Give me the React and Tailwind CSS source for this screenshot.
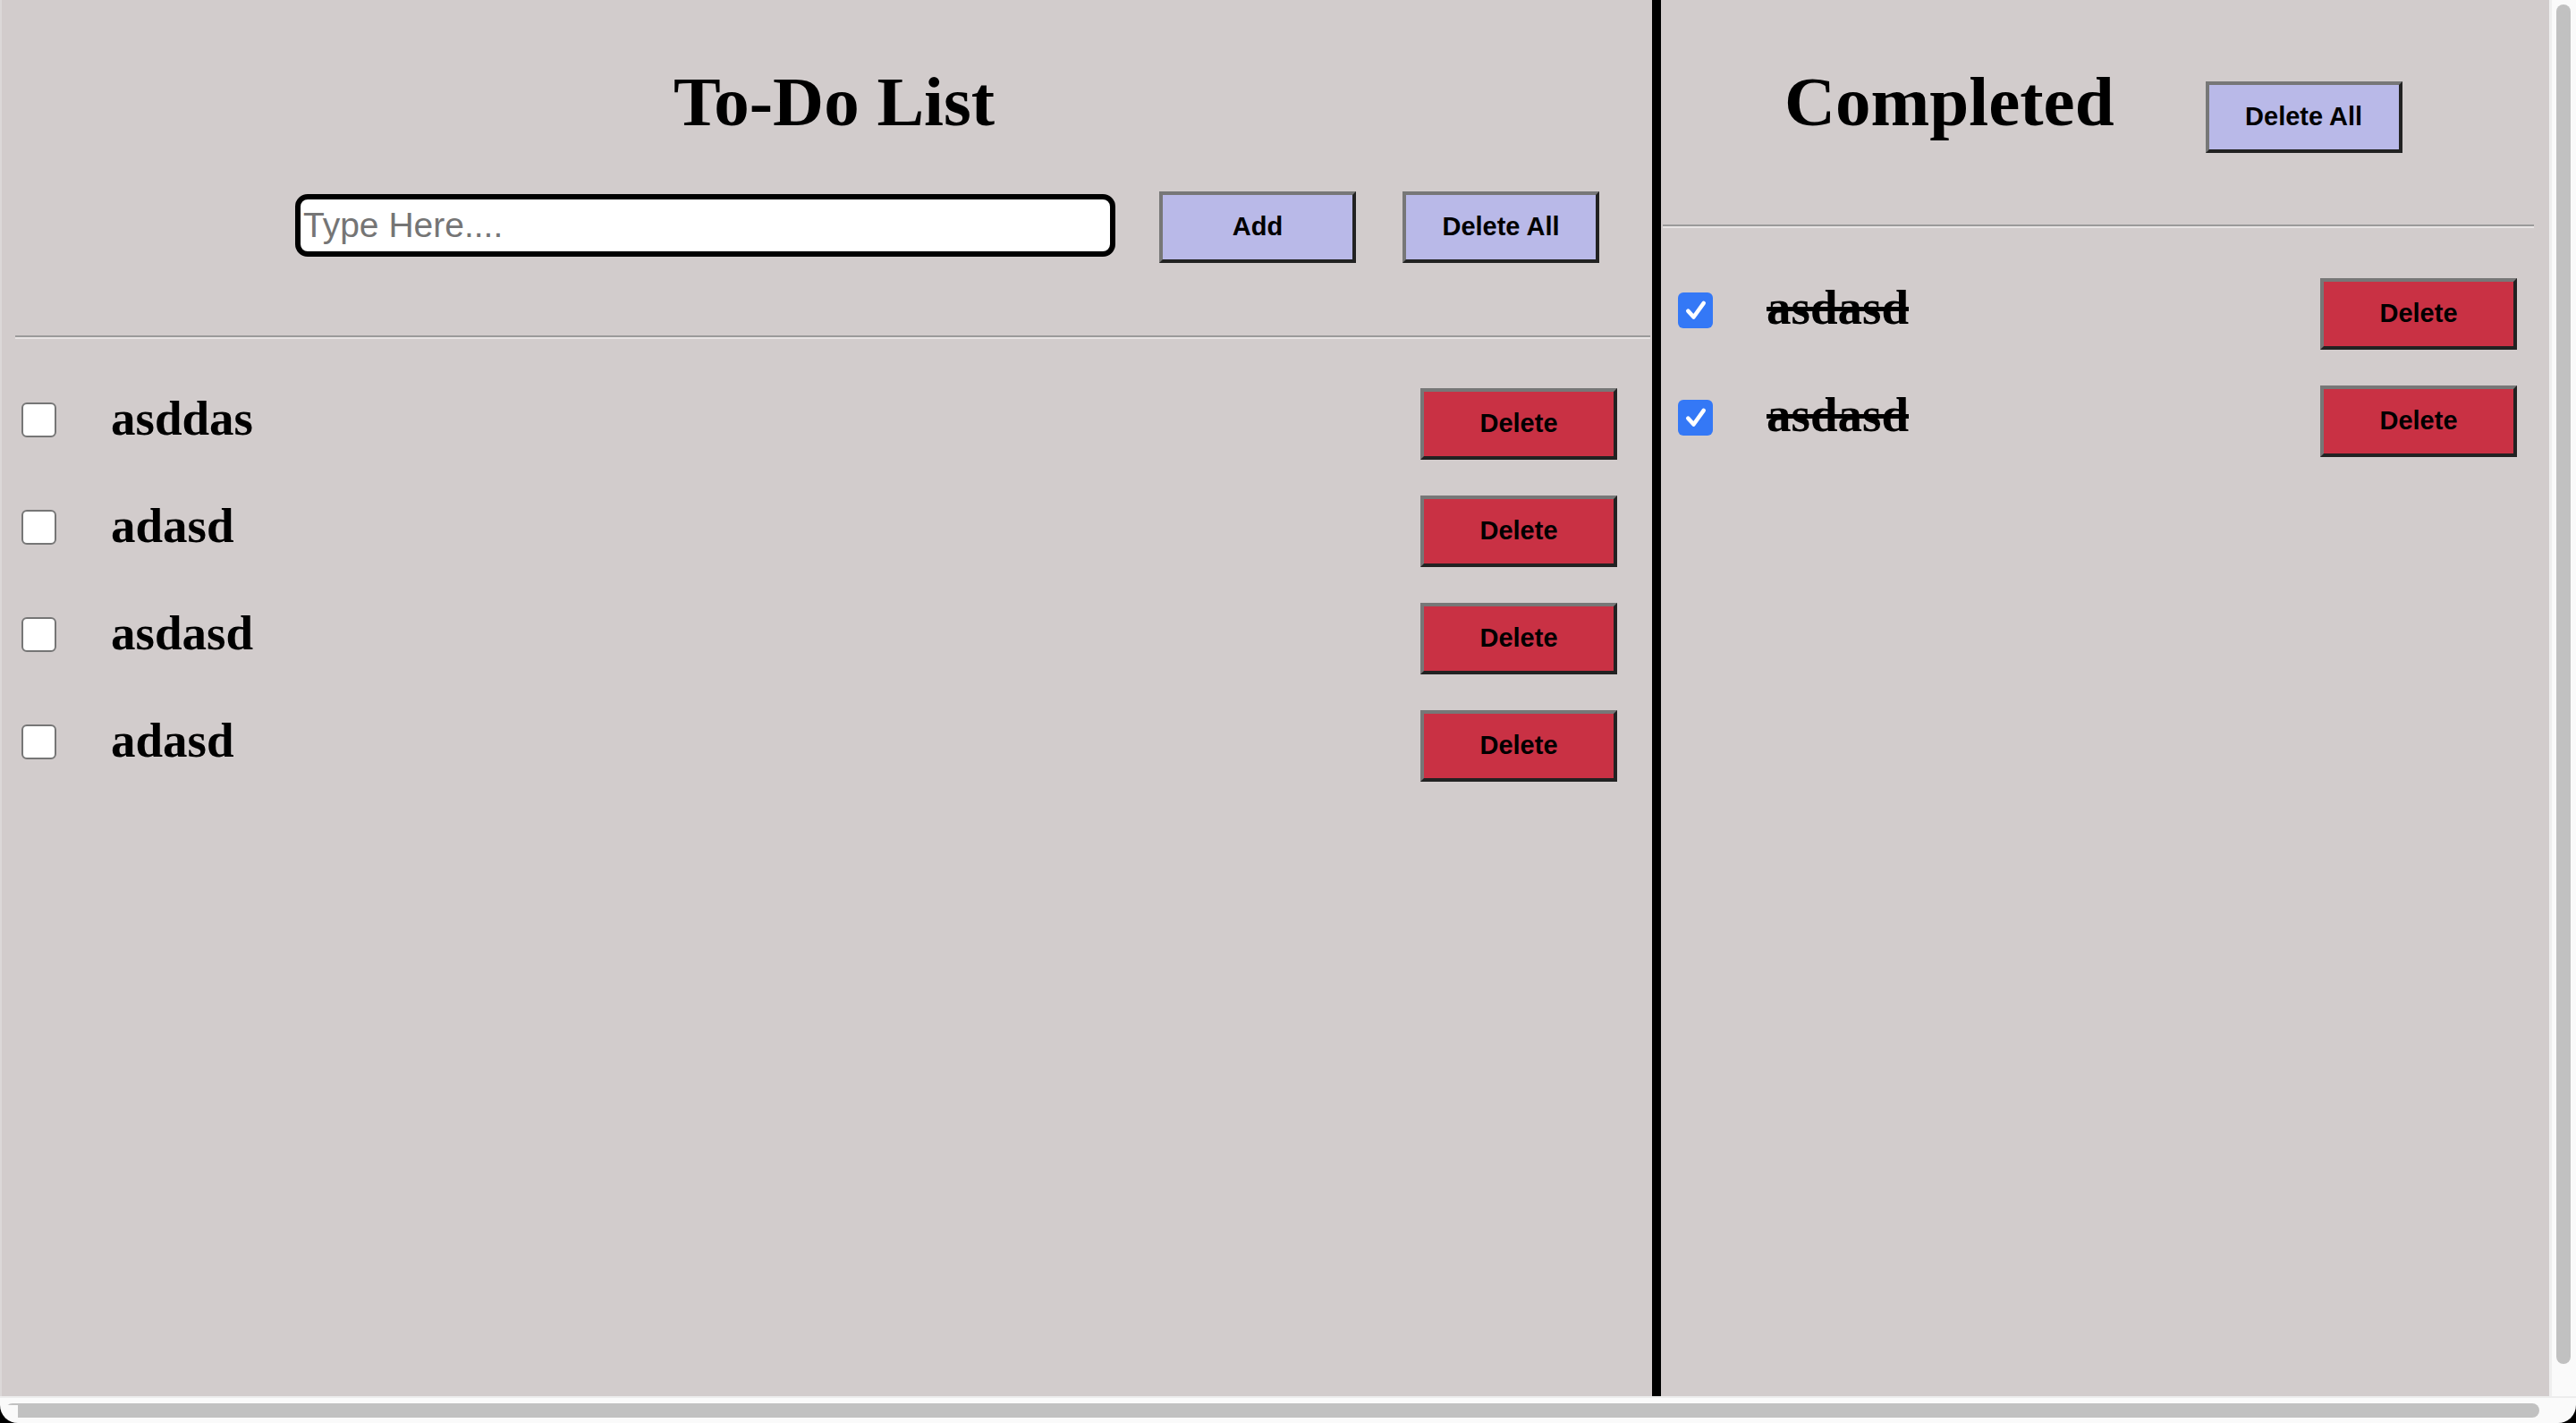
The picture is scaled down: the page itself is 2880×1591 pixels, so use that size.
import React from 'react';

const todos = ['asddas', 'adasd', 'asdasd', 'adasd'];
const completed = ['asdasd', 'asdasd'];

// bevelled button like the browser's default outset border
const Btn = ({ children, className = '' }) => (
  <button
    className={`w-[220px] h-[80px] shrink-0 border-[4px] border-t-[#777777] border-l-[#777777] border-b-[#222222] border-r-[#222222] font-['Liberation_Sans',Arial,sans-serif] font-bold text-[29px] text-black ${className}`}
  >
    {children}
  </button>
);

const Box = ({ checked }) =>
  checked ? (
    <span className="w-[39px] h-[40px] shrink-0 rounded-[6px] bg-[#3478f6] flex items-center justify-center">
      <svg width="30" height="30" viewBox="0 0 24 24" fill="none">
        <path d="M5 12.5 L10 18 L19 5.5" stroke="white" strokeWidth="3.6" strokeLinecap="round" strokeLinejoin="round" />
      </svg>
    </span>
  ) : (
    <span className="w-[39px] h-[39px] shrink-0 rounded-[6px] border-2 border-[#767676] bg-white" />
  );

const App = () => {
  return (
    <div className="relative w-[2880px] h-[1591px] bg-[#fafafa] flex flex-col overflow-hidden">
      <div className="flex h-[1561px]">
        <div className="flex w-[2850px] h-full bg-[#d2cccc] border-l-2 border-[#dcd8d8]">
          {/* To-Do side */}
          <section className="w-[1845px] shrink-0 flex flex-col">
            <h1 className="mt-[74px] pl-[16px] text-center text-[79px] leading-none font-bold font-['Liberation_Serif','Times_New_Roman',serif] text-black">
              To-Do List
            </h1>
            <div className="mt-[61px] flex items-center">
              <input
                type="text"
                placeholder="Type Here...."
                className="ml-[328px] mb-[4px] w-[917px] h-[70px] border-[6px] border-black rounded-[14px] bg-white px-[3px] text-[39px] font-['Liberation_Sans',Arial,sans-serif] placeholder:text-[#757575] outline-none"
              />
              <Btn className="ml-[49px] bg-[#b9b9e8]">Add</Btn>
              <Btn className="ml-[52px] bg-[#b9b9e8]">Delete All</Btn>
            </div>
            <div className="mt-[81px] ml-[15px] mr-[2px] h-[4px] border-t-2 border-b-2 border-t-[#9a9a9a] border-b-[#e8e4e4]" />
            <div className="mt-[35px] flex flex-col">
              {todos.map((t, i) => (
                <div key={i} className="h-[120px] flex items-center">
                  <span className="ml-[22px] mb-[9px] flex">
                    <Box />
                  </span>
                  <span className="ml-[61px] mb-[12px] text-[55px] font-bold font-['Liberation_Serif','Times_New_Roman',serif] text-black">
                    {t}
                  </span>
                  <Btn className="ml-auto mr-[39px] bg-[#c93144]">Delete</Btn>
                </div>
              ))}
            </div>
          </section>

          <div className="w-[10px] shrink-0 bg-black" />

          {/* Completed side */}
          <section className="flex-1 flex flex-col">
            <div className="flex items-start">
              <h1 className="ml-[138px] mt-[74px] text-[79px] leading-none font-bold font-['Liberation_Serif','Times_New_Roman',serif] text-black">
                Completed
              </h1>
              <Btn className="mt-[91px] ml-[102px] bg-[#b9b9e8]">Delete All</Btn>
            </div>
            <div className="mt-[80px] ml-[2px] mr-[17px] h-[4px] border-t-2 border-b-2 border-t-[#9a9a9a] border-b-[#e8e4e4]" />
            <div className="mt-[36px] flex flex-col">
              {completed.map((t, i) => (
                <div key={i} className="h-[120px] flex items-center">
                  <span className="ml-[19px] mb-[8px] flex">
                    <Box checked />
                  </span>
                  <span className="ml-[60px] mb-[14px] text-[55px] font-bold line-through font-['Liberation_Serif','Times_New_Roman',serif] text-black">
                    {t}
                  </span>
                  <Btn className="ml-auto mr-[36px] bg-[#c93144]">Delete</Btn>
                </div>
              ))}
            </div>
          </section>
        </div>

        {/* vertical scrollbar */}
        <div className="flex-1 border-l-[3px] border-[#efefef] bg-[#fafafa] pt-[5px] pl-[5px]">
          <div className="w-[16px] h-[1520px] rounded-full bg-[#c1c1c1]" />
        </div>
      </div>

      {/* horizontal scrollbar */}
      <div className="h-[30px] border-t-2 border-[#ededed] bg-[#fafafa] pt-[6px] pl-[6px]">
        <div className="h-[16px] w-[2833px] rounded-full bg-[#c1c1c1]" />
      </div>

      {/* window corners */}
      <div className="absolute bottom-0 left-0 w-[20px] h-[20px] bg-black">
        <div className="w-full h-full bg-[#fafafa] rounded-bl-[20px]" />
      </div>
      <div className="absolute bottom-0 right-0 w-[20px] h-[20px] bg-black">
        <div className="w-full h-full bg-[#fafafa] rounded-br-[20px]" />
      </div>
    </div>
  );
};

export default App;
